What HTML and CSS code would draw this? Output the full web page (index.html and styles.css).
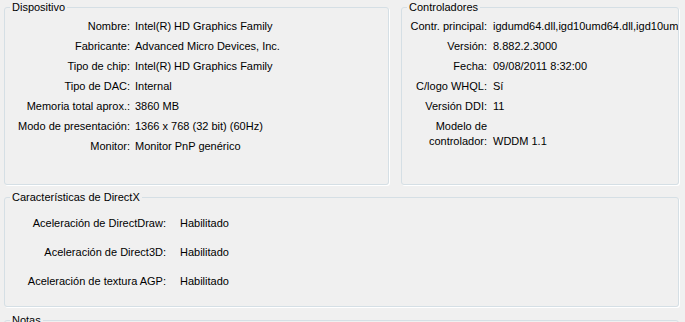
FILE: index.html
```html
<!DOCTYPE html>
<html lang="es">
<head>
<meta charset="utf-8">
<link rel="stylesheet" href="styles.css">
</head>
<body>
<div class="page">
  <div class="top">
    <fieldset class="group dev">
      <legend>Dispositivo</legend>
      <div class="rows dev-rows">
        <div class="lbl">Nombre:</div><div class="val">Intel(R) HD Graphics Family</div>
        <div class="lbl">Fabricante:</div><div class="val">Advanced Micro Devices, Inc.</div>
        <div class="lbl">Tipo de chip:</div><div class="val">Intel(R) HD Graphics Family</div>
        <div class="lbl">Tipo de DAC:</div><div class="val">Internal</div>
        <div class="lbl">Memoria total aprox.:</div><div class="val">3860 MB</div>
        <div class="lbl">Modo de presentación:</div><div class="val">1366 x 768 (32 bit) (60Hz)</div>
        <div class="lbl">Monitor:</div><div class="val">Monitor PnP genérico</div>
      </div>
    </fieldset>
    <fieldset class="group drv">
      <legend>Controladores</legend>
      <div class="rows drv-rows">
        <div class="lbl">Contr. principal:</div><div class="val">igdumd64.dll,igd10umd64.dll,igd10umd64.dll</div>
        <div class="lbl">Versión:</div><div class="val">8.882.2.3000</div>
        <div class="lbl">Fecha:</div><div class="val">09/08/2011 8:32:00</div>
        <div class="lbl">C/logo WHQL:</div><div class="val">Sí</div>
        <div class="lbl">Versión DDI:</div><div class="val">11</div>
        <div class="lbl">Modelo de<br>controlador:</div><div class="val">WDDM 1.1</div>
      </div>
    </fieldset>
  </div>
  <fieldset class="group dx">
    <legend>Características de DirectX</legend>
    <div class="rows dx-rows">
      <div class="lbl">Aceleración de DirectDraw:</div><div class="val">Habilitado</div>
      <div class="lbl">Aceleración de Direct3D:</div><div class="val">Habilitado</div>
      <div class="lbl">Aceleración de textura AGP:</div><div class="val">Habilitado</div>
    </div>
  </fieldset>
  <fieldset class="group notes">
    <legend>Notas</legend>
  </fieldset>
</div>
</body>
</html>
```
FILE: styles.css
```css
html, body {
  margin: 0;
  padding: 0;
  background: #f0f0f0;
  overflow: hidden;
}
body {
  font-family: "Liberation Sans", Arial, sans-serif;
  font-size: 11px;
  color: #000;
  width: 685px;
  height: 322px;
}
.page {
  padding: 1px 0 0 4px;
  display: flex;
  flex-direction: column;
}
.top {
  display: flex;
  gap: 12px;
}
.group {
  margin: 0;
  padding: 0;
  min-width: 0;
  box-sizing: border-box;
  border: 1px solid #d5dfe5;
  border-radius: 3px;
  box-shadow: 1px 1px 0 #ffffff;
  overflow: hidden;
}
.group legend {
  padding: 0 2px;
  margin-left: 5px;
  line-height: 13px;
  height: 13px;
}
.dev {
  width: 385px;
  height: 184px;
}
.drv {
  width: 278px;
  height: 184px;
}
.dx {
  width: 675px;
  height: 116px;
  margin-top: 6px;
}
.notes {
  width: 675px;
  height: 60px;
  margin-top: 7px;
}
.rows {
  display: grid;
  line-height: 15px;
  row-gap: 5px;
  align-items: last baseline;
  white-space: nowrap;
}
.lbl {
  text-align: right;
}
.dev-rows {
  grid-template-columns: 125px auto;
  column-gap: 5px;
  padding-top: 5px;
}
.drv-rows {
  grid-template-columns: 85px auto;
  column-gap: 6px;
  padding-top: 5px;
}
.dx-rows {
  grid-template-columns: 161px auto;
  column-gap: 14px;
  row-gap: 14px;
  padding-top: 12px;
}
```
